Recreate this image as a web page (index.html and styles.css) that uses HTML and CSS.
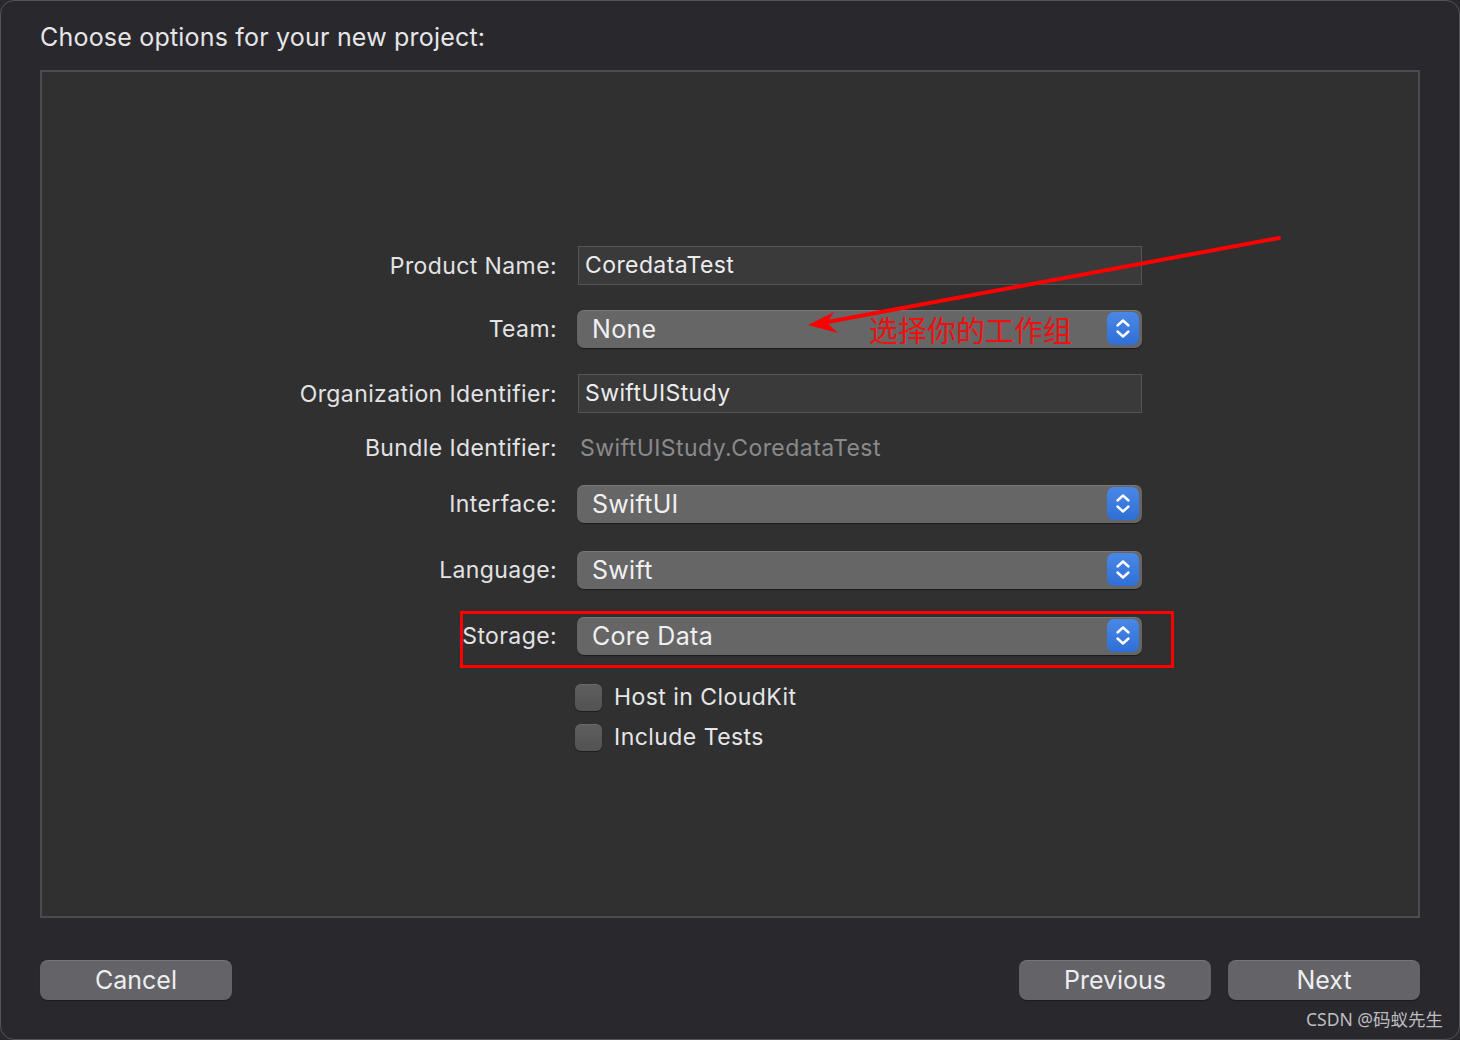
FILE: index.html
```html
<!DOCTYPE html>
<html lang="en">
<head>
<meta charset="utf-8">
<title>Choose options for your new project</title>
<link rel="stylesheet" href="styles.css">
</head>
<body>
<div class="window">
  <div class="title">Choose options for your new project:</div>
  <div class="panel">
    <div class="form">
      <div class="row r-product">
        <div class="label">Product Name:</div>
        <div class="textfield">CoredataTest</div>
      </div>
      <div class="row r-team">
        <div class="label">Team:</div>
        <div class="popup">
          <span class="popup-text">None</span>
          <span class="note">选择你的工作组</span>
          <span class="stepper"><svg viewBox="0 0 32 33" width="32" height="33"><path d="M10.5 13.5 L16 8.5 L21.5 13.5 M10.5 19.5 L16 24.5 L21.5 19.5" fill="none" stroke="#fff" stroke-width="2.4" stroke-linecap="round" stroke-linejoin="round"/></svg></span>
        </div>
      </div>
      <div class="row r-org">
        <div class="label">Organization Identifier:</div>
        <div class="textfield">SwiftUIStudy</div>
      </div>
      <div class="row r-bundle">
        <div class="label">Bundle Identifier:</div>
        <div class="static">SwiftUIStudy.CoredataTest</div>
      </div>
      <div class="row r-interface">
        <div class="label">Interface:</div>
        <div class="popup">
          <span class="popup-text">SwiftUI</span>
          <span class="stepper"><svg viewBox="0 0 32 33" width="32" height="33"><path d="M10.5 13.5 L16 8.5 L21.5 13.5 M10.5 19.5 L16 24.5 L21.5 19.5" fill="none" stroke="#fff" stroke-width="2.4" stroke-linecap="round" stroke-linejoin="round"/></svg></span>
        </div>
      </div>
      <div class="row r-language">
        <div class="label">Language:</div>
        <div class="popup">
          <span class="popup-text">Swift</span>
          <span class="stepper"><svg viewBox="0 0 32 33" width="32" height="33"><path d="M10.5 13.5 L16 8.5 L21.5 13.5 M10.5 19.5 L16 24.5 L21.5 19.5" fill="none" stroke="#fff" stroke-width="2.4" stroke-linecap="round" stroke-linejoin="round"/></svg></span>
        </div>
      </div>
      <div class="row r-storage">
        <div class="label">Storage:</div>
        <div class="popup">
          <span class="popup-text">Core Data</span>
          <span class="stepper"><svg viewBox="0 0 32 33" width="32" height="33"><path d="M10.5 13.5 L16 8.5 L21.5 13.5 M10.5 19.5 L16 24.5 L21.5 19.5" fill="none" stroke="#fff" stroke-width="2.4" stroke-linecap="round" stroke-linejoin="round"/></svg></span>
        </div>
        <div class="highlight"></div>
      </div>
      <div class="row r-check1">
        <div class="label"></div>
        <label class="check"><span class="box"></span><span>Host in CloudKit</span></label>
      </div>
      <div class="row r-check2">
        <div class="label"></div>
        <label class="check"><span class="box"></span><span>Include Tests</span></label>
      </div>
    </div>
  </div>
  <div class="footer">
    <button class="btn">Cancel</button>
    <div class="footer-right">
      <button class="btn">Previous</button>
      <button class="btn">Next</button>
    </div>
  </div>
  <div class="watermark">CSDN @码蚁先生</div>
  <svg class="arrow" width="1460" height="1040" viewBox="0 0 1460 1040">
    <line x1="1279" y1="238" x2="822" y2="323" stroke="#f00" stroke-width="4" stroke-linecap="round"/>
    <path d="M808 325 L834 312 L827 323 L838 333 Z" fill="#f00"/>
  </svg>
</div>
</body>
</html>
```

FILE: styles.css
```css
html, body {
  margin: 0;
  padding: 0;
  background: #2a2a2c;
}
body {
  width: 1460px;
  height: 1040px;
  font-family: Inter, "Noto Sans", "Noto Sans CJK SC", sans-serif;
  color: #e3e3e5;
  overflow: hidden;
}
.window {
  position: relative;
  box-sizing: border-box;
  width: 1460px;
  height: 1040px;
  background: #29282d;
  border: 1px solid #55545a;
  border-radius: 14px;
  padding: 0 39px 0 39px;
  display: flex;
  flex-direction: column;
}
.title {
  height: 69px;
  line-height: 73px;
  font-size: 25px;
  letter-spacing: 0.2px;
  color: #e6e6e8;
  box-sizing: border-box;
}
.panel {
  box-sizing: border-box;
  height: 848px;
  background: #303030;
  border: 2px solid #4c4c4e;
  padding-top: 174px;
}
.form {
  display: flex;
  flex-direction: column;
}
.row {
  position: relative;
  display: flex;
  align-items: center;
  gap: 21px;
}
.label {
  width: 515px;
  flex: none;
  text-align: right;
  font-size: 23px;
  letter-spacing: 0.4px;
  color: #e3e3e5;
}
.r-product { height: 39px; }
.r-team { height: 38px; margin-top: 25px; }
.r-org { height: 39px; margin-top: 26px; }
.r-bundle { height: 39px; margin-top: 15px; }
.r-interface { height: 38px; margin-top: 18px; }
.r-language { height: 38px; margin-top: 28px; }
.r-storage { height: 38px; margin-top: 28px; }
.r-check1 { height: 26px; margin-top: 29px; }
.r-check2 { height: 26px; margin-top: 14px; }

.textfield {
  box-sizing: border-box;
  width: 564px;
  height: 39px;
  background: #3a3a3a;
  border: 1px solid #555556;
  padding-left: 6px;
  font-size: 23px;
  letter-spacing: 0.4px;
  line-height: 37px;
  color: #ececee;
}
.static {
  font-size: 23px;
  letter-spacing: 0.45px;
  color: #8a8a8c;
  padding-left: 2px;
}
.popup {
  position: relative;
  box-sizing: border-box;
  width: 565px;
  height: 38px;
  margin-left: -1px;
  background: #666666;
  border-radius: 7px;
  box-shadow: 0 1px 1px rgba(0,0,0,0.45), inset 0 1px 0 rgba(255,255,255,0.12);
  display: flex;
  align-items: center;
  padding-left: 15px;
}
.popup-text {
  font-size: 25px;
  letter-spacing: 0.3px;
  color: #f0f0f2;
}
.stepper {
  position: absolute;
  right: 3px;
  top: 2px;
  width: 32px;
  height: 33px;
  border-radius: 7px;
  background: linear-gradient(#4a88e6, #2f6fd6);
  display: flex;
}
.note {
  position: absolute;
  left: 292px;
  top: 0;
  font-family: "Noto Sans CJK SC", sans-serif;
  font-size: 29px;
  letter-spacing: 0;
  line-height: 38px;
  color: #f20f0f;
}
.highlight {
  position: absolute;
  left: 418px;
  top: -6px;
  width: 714px;
  height: 57px;
  box-sizing: border-box;
  border: 3px solid #f00;
}
.check {
  display: flex;
  align-items: center;
  gap: 12px;
  font-size: 23px;
  letter-spacing: 0.45px;
  color: #e6e6e8;
  margin-left: -3px;
}
.box {
  box-sizing: border-box;
  width: 27px;
  height: 27px;
  border-radius: 6px;
  background: linear-gradient(#5e5e5e, #525252);
  box-shadow: inset 0 1px 0 rgba(255,255,255,0.08), 0 1px 1px rgba(0,0,0,0.4);
}
.footer {
  display: flex;
  justify-content: space-between;
  margin-top: 42px;
}
.footer-right {
  display: flex;
  gap: 17px;
}
.btn {
  width: 192px;
  height: 40px;
  border: none;
  border-radius: 8px;
  background: #646368;
  box-shadow: inset 0 1px 0 rgba(255,255,255,0.12), 0 1px 1px rgba(0,0,0,0.35);
  color: #eeeef0;
  font-family: Inter, "Noto Sans", sans-serif;
  font-size: 25px;
  padding: 0;
  line-height: 40px;
}
.watermark {
  position: absolute;
  right: 16px;
  bottom: 8px;
  font-family: "Noto Sans", "Noto Sans CJK SC", sans-serif;
  font-size: 17.5px;
  color: #bdbdc0;
}
.arrow {
  position: absolute;
  left: -1px;
  top: -1px;
  pointer-events: none;
}
```
